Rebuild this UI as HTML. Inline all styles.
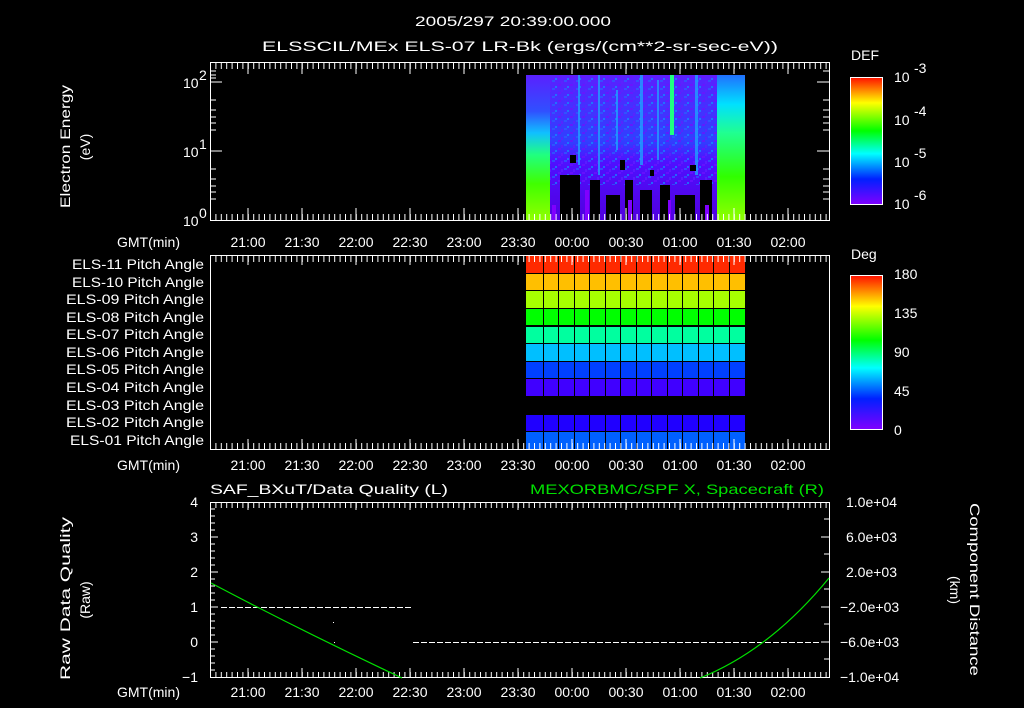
<!DOCTYPE html>
<html><head><meta charset="utf-8"><style>
html,body{margin:0;padding:0;background:#000;width:1024px;height:708px;overflow:hidden}
svg{display:block}
text{font-family:"Liberation Sans",sans-serif;fill:#fff;font-size:14px}
</style></head><body>
<svg width="1024" height="708" viewBox="0 0 1024 708" xmlns="http://www.w3.org/2000/svg">
<defs>
<linearGradient id="cb" x1="0" y1="0" x2="0" y2="1">
<stop offset="0" stop-color="#ff1000"/><stop offset="0.2" stop-color="#ffff00"/><stop offset="0.42" stop-color="#00ff00"/><stop offset="0.6" stop-color="#00ffff"/><stop offset="0.8" stop-color="#0020ff"/><stop offset="1" stop-color="#8000ff"/>
</linearGradient>
<linearGradient id="gl" x1="0" y1="0" x2="0" y2="1">
<stop offset="0" stop-color="#5a20ff"/><stop offset="0.25" stop-color="#3050ff"/><stop offset="0.4" stop-color="#10c0ff"/><stop offset="0.55" stop-color="#20ff80"/><stop offset="0.75" stop-color="#40ff00"/><stop offset="1" stop-color="#90ff00"/>
</linearGradient>
<linearGradient id="gr" x1="0" y1="0" x2="0" y2="1">
<stop offset="0" stop-color="#2070ff"/><stop offset="0.2" stop-color="#00e0ff"/><stop offset="0.4" stop-color="#20ff90"/><stop offset="0.7" stop-color="#30ff00"/><stop offset="1" stop-color="#90ff00"/>
</linearGradient>
<linearGradient id="gm" x1="0" y1="0" x2="0" y2="1">
<stop offset="0" stop-color="#5a20ff"/><stop offset="0.45" stop-color="#3040ff"/><stop offset="0.6" stop-color="#5010ff"/><stop offset="1" stop-color="#5000e0"/>
</linearGradient>
<pattern id="tk" x="210" y="0" width="5.4" height="10" patternUnits="userSpaceOnUse"><rect x="0" y="0" width="1" height="10" fill="#fff"/></pattern>
<pattern id="nz" x="0" y="0" width="12" height="8" patternUnits="userSpaceOnUse">
<rect x="0" y="0" width="3" height="2" fill="#2a60ff"/><rect x="6" y="4" width="3" height="2" fill="#7010ff"/><rect x="3" y="6" width="2" height="2" fill="#1090ff"/><rect x="9" y="1" width="2" height="3" fill="#6020ff"/>
</pattern>
</defs>

<text x="415" y="26" font-size="16" textLength="196" lengthAdjust="spacingAndGlyphs">2005/297 20:39:00.000</text>
<text x="262" y="51" font-size="16" textLength="516" lengthAdjust="spacingAndGlyphs">ELSSCIL/MEx ELS-07 LR-Bk  (ergs/(cm**2-sr-sec-eV))</text>

<!-- TOP PANEL spectrogram -->
<rect x="526" y="75" width="24" height="145" fill="url(#gl)"/>
<rect x="550" y="75" width="167" height="145" fill="url(#gm)"/>
<rect x="550" y="75" width="167" height="110" fill="url(#nz)" opacity="0.7"/>
<rect x="717" y="75" width="28" height="145" fill="url(#gr)"/>
<g fill="#20a0ff" opacity="0.8">
<rect x="578" y="75" width="2" height="90"/><rect x="598" y="75" width="2" height="100"/><rect x="616" y="90" width="2" height="60"/><rect x="640" y="75" width="3" height="90"/><rect x="657" y="80" width="2" height="80"/><rect x="695" y="75" width="3" height="100"/>
</g>
<rect x="670" y="75" width="4" height="60" fill="#20ff80"/>
<g fill="#000">
<rect x="560" y="175" width="20" height="45"/><rect x="590" y="180" width="10" height="40"/><rect x="606" y="195" width="14" height="25"/><rect x="625" y="180" width="8" height="40"/><rect x="640" y="190" width="12" height="30"/><rect x="660" y="185" width="10" height="35"/><rect x="675" y="195" width="20" height="25"/><rect x="700" y="180" width="12" height="40"/>
<rect x="570" y="155" width="6" height="8"/><rect x="620" y="160" width="5" height="10"/><rect x="690" y="165" width="6" height="6"/><rect x="650" y="170" width="4" height="6"/>
</g>
<g fill="#8000ff">
<rect x="552" y="205" width="4" height="15"/><rect x="585" y="190" width="4" height="30"/><rect x="628" y="200" width="4" height="20"/><rect x="668" y="200" width="3" height="20"/><rect x="705" y="205" width="4" height="15"/>
</g>
<rect x="210.5" y="62.5" width="619" height="158" fill="none" stroke="#fff"/>
<rect x="210" y="63" width="619" height="6" fill="url(#tk)"/>
<rect x="210" y="214" width="619" height="6" fill="url(#tk)"/>
<g stroke="#fff">
<path d="M248 62v12M302 62v12M356 62v12M410 62v12M464 62v12M518 62v12M572 62v12M626 62v12M680 62v12M734 62v12M788 62v12"/>
<path d="M248 220v-12M302 220v-12M356 220v-12M410 220v-12M464 220v-12M518 220v-12M572 220v-12M626 220v-12M680 220v-12M734 220v-12M788 220v-12"/>
<path d="M210 82h12M210 151h12M210 100h6M210 110h6M210 117h6M210 123h6M210 130h6M210 169h6M210 179h6M210 186h6M210 192h6M210 199h6M210 71h6M210 75h6M210 78h6"/>
<path d="M829 82h-12M829 151h-12M829 100h-6M829 110h-6M829 117h-6M829 123h-6M829 130h-6M829 169h-6M829 179h-6M829 186h-6M829 192h-6M829 199h-6M829 71h-6"/>
</g>
<text x="183" y="88">10</text><text x="199" y="80" font-size="10">2</text>
<text x="183" y="157">10</text><text x="199" y="149" font-size="10">1</text>
<text x="183" y="226">10</text><text x="199" y="218" font-size="10">0</text>
<text transform="translate(70,208) rotate(-90)" textLength="123" lengthAdjust="spacingAndGlyphs">Electron Energy</text>
<text transform="translate(90,147) rotate(-90)" text-anchor="middle">(eV)</text>
<g text-anchor="middle">
<text x="248" y="247">21:00</text><text x="302" y="247">21:30</text><text x="356" y="247">22:00</text><text x="410" y="247">22:30</text><text x="464" y="247">23:00</text><text x="518" y="247">23:30</text><text x="572" y="247">00:00</text><text x="626" y="247">00:30</text><text x="680" y="247">01:00</text><text x="734" y="247">01:30</text><text x="788" y="247">02:00</text>
</g>
<text x="117" y="247">GMT(min)</text>
<text x="851" y="60" font-size="16">DEF</text>
<rect x="850.5" y="77.5" width="32" height="127" fill="url(#cb)" stroke="#fff"/>
<text x="894" y="82" font-size="16">10</text><text x="914" y="73" font-size="11">-3</text>
<text x="894" y="125" font-size="16">10</text><text x="914" y="116" font-size="11">-4</text>
<text x="894" y="167" font-size="16">10</text><text x="914" y="158" font-size="11">-5</text>
<text x="894" y="209" font-size="16">10</text><text x="914" y="200" font-size="11">-6</text>

<!-- MIDDLE PANEL -->
<g>
<rect x="526" y="256" width="219" height="17" fill="#ff2a00"/>
<rect x="526" y="274" width="219" height="16" fill="#ffbf00"/>
<rect x="526" y="291" width="219" height="17" fill="#a6ff00"/>
<rect x="526" y="309" width="219" height="16" fill="#00ff00"/>
<rect x="526" y="327" width="219" height="16" fill="#00ff9f"/>
<rect x="526" y="344" width="219" height="17" fill="#00bfff"/>
<rect x="526" y="362" width="219" height="16" fill="#0040ff"/>
<rect x="526" y="379" width="219" height="17" fill="#4000ff"/>
<rect x="526" y="415" width="219" height="16" fill="#2000ff"/>
<rect x="526" y="432" width="219" height="17" fill="#0060ff"/>
<g stroke="#000" stroke-width="1">
<path d="M543.5 255v194M558.5 255v194M574.5 255v194M589.5 255v194M605.5 255v194M620.5 255v194M636.5 255v194M651.5 255v194M667.5 255v194M682.5 255v194M698.5 255v194M713.5 255v194M729.5 255v194"/>
<path d="M526 273.5h219M526 290.5h219M526 308.5h219M526 326.5h219M526 343.5h219M526 361.5h219M526 378.5h219M526 431.5h219"/>
</g>
</g>
<rect x="210.5" y="255.5" width="619" height="194" fill="none" stroke="#fff"/>
<rect x="210" y="256" width="619" height="6" fill="url(#tk)"/>
<rect x="210" y="443" width="619" height="6" fill="url(#tk)"/>
<g stroke="#fff">
<path d="M248 255v10M302 255v10M356 255v10M410 255v10M464 255v10M518 255v10M572 255v10M626 255v10M680 255v10M734 255v10M788 255v10"/>
<path d="M248 449v-10M302 449v-10M356 449v-10M410 449v-10M464 449v-10M518 449v-10M572 449v-10M626 449v-10M680 449v-10M734 449v-10M788 449v-10"/>
</g>
<g font-size="13">
<text x="72" y="269" textLength="132" lengthAdjust="spacingAndGlyphs">ELS-11 Pitch Angle</text>
<text x="72" y="287" textLength="132" lengthAdjust="spacingAndGlyphs">ELS-10 Pitch Angle</text>
<text x="66" y="304" textLength="138" lengthAdjust="spacingAndGlyphs">ELS-09 Pitch Angle</text>
<text x="66" y="322" textLength="138" lengthAdjust="spacingAndGlyphs">ELS-08 Pitch Angle</text>
<text x="66" y="339" textLength="138" lengthAdjust="spacingAndGlyphs">ELS-07 Pitch Angle</text>
<text x="66" y="357" textLength="138" lengthAdjust="spacingAndGlyphs">ELS-06 Pitch Angle</text>
<text x="66" y="374" textLength="138" lengthAdjust="spacingAndGlyphs">ELS-05 Pitch Angle</text>
<text x="66" y="392" textLength="138" lengthAdjust="spacingAndGlyphs">ELS-04 Pitch Angle</text>
<text x="66" y="410" textLength="138" lengthAdjust="spacingAndGlyphs">ELS-03 Pitch Angle</text>
<text x="66" y="427" textLength="138" lengthAdjust="spacingAndGlyphs">ELS-02 Pitch Angle</text>
<text x="70" y="445" textLength="134" lengthAdjust="spacingAndGlyphs">ELS-01 Pitch Angle</text>
</g>
<g text-anchor="middle">
<text x="248" y="470">21:00</text><text x="302" y="470">21:30</text><text x="356" y="470">22:00</text><text x="410" y="470">22:30</text><text x="464" y="470">23:00</text><text x="518" y="470">23:30</text><text x="572" y="470">00:00</text><text x="626" y="470">00:30</text><text x="680" y="470">01:00</text><text x="734" y="470">01:30</text><text x="788" y="470">02:00</text>
</g>
<text x="117" y="470">GMT(min)</text>
<text x="851" y="259" font-size="16">Deg</text>
<rect x="850.5" y="275.5" width="32" height="154" fill="url(#cb)" stroke="#fff"/>
<g font-size="16">
<text x="894" y="279">180</text><text x="894" y="318">135</text><text x="894" y="357">90</text><text x="894" y="396">45</text><text x="894" y="435">0</text>
</g>

<!-- BOTTOM PANEL -->
<text x="210" y="494" font-size="16" textLength="238" lengthAdjust="spacingAndGlyphs">SAF_BXuT/Data Quality (L)</text>
<text x="530" y="494" font-size="16" textLength="294" lengthAdjust="spacingAndGlyphs" style="fill:#00e000">MEXORBMC/SPF X, Spacecraft (R)</text>
<rect x="210.5" y="502.5" width="619" height="175" fill="none" stroke="#fff"/>
<rect x="210" y="503" width="619" height="5" fill="url(#tk)"/>
<rect x="210" y="672" width="619" height="5" fill="url(#tk)"/>
<g stroke="#fff">
<path d="M248 502v8M302 502v8M356 502v8M410 502v8M464 502v8M518 502v8M572 502v8M626 502v8M680 502v8M734 502v8M788 502v8"/>
<path d="M248 677v-9M302 677v-9M356 677v-9M410 677v-9M464 677v-9M518 677v-9M572 677v-9M626 677v-9M680 677v-9M734 677v-9M788 677v-9"/>
<path d="M210 537h8M210 572h8M210 607h8M210 642h8M210 509h5M210 516h5M210 523h5M210 530h5M210 544h5M210 551h5M210 558h5M210 565h5M210 579h5M210 586h5M210 593h5M210 600h5M210 614h5M210 621h5M210 628h5M210 635h5M210 649h5M210 656h5M210 663h5M210 670h5"/>
<path d="M829 537h-8M829 572h-8M829 607h-8M829 642h-8M829 519h-5M829 554h-5M829 589h-5M829 624h-5M829 659h-5"/>
</g>
<g text-anchor="end" font-size="14">
<text x="198" y="507">4</text><text x="198" y="542">3</text><text x="198" y="577">2</text><text x="198" y="612">1</text><text x="198" y="647">0</text><text x="198" y="682">−1</text>
</g>
<g font-size="12">
<text x="846" y="507">1.0e+04</text><text x="846" y="542">6.0e+03</text><text x="846" y="577">2.0e+03</text><text x="840" y="612">−2.0e+03</text><text x="840" y="647">−6.0e+03</text><text x="840" y="682">−1.0e+04</text>
</g>
<text transform="translate(70,680) rotate(-90)" textLength="163" lengthAdjust="spacingAndGlyphs">Raw Data Quality</text>
<text transform="translate(90,600) rotate(-90)" text-anchor="middle">(Raw)</text>
<text transform="translate(970,503) rotate(90)" textLength="173" lengthAdjust="spacingAndGlyphs">Component Distance</text>
<text transform="translate(950,590) rotate(90)" text-anchor="middle">(km)</text>
<path d="M221 607.5H413" stroke="#fff" stroke-dasharray="6,2"/>
<path d="M413 642.5H820" stroke="#fff" stroke-dasharray="6,2"/>
<rect x="333" y="622" width="1" height="1" fill="#fff"/><rect x="334" y="642" width="1" height="1" fill="#fff"/>
<path d="M211 583 Q300 630 402 678" fill="none" stroke="#00e000" stroke-width="1.2"/>
<path d="M700 678 Q770 650 829 578" fill="none" stroke="#00e000" stroke-width="1.2"/>
<g text-anchor="middle">
<text x="248" y="697">21:00</text><text x="302" y="697">21:30</text><text x="356" y="697">22:00</text><text x="410" y="697">22:30</text><text x="464" y="697">23:00</text><text x="518" y="697">23:30</text><text x="572" y="697">00:00</text><text x="626" y="697">00:30</text><text x="680" y="697">01:00</text><text x="734" y="697">01:30</text><text x="788" y="697">02:00</text>
</g>
<text x="117" y="697">GMT(min)</text>
</svg>
</body></html>
